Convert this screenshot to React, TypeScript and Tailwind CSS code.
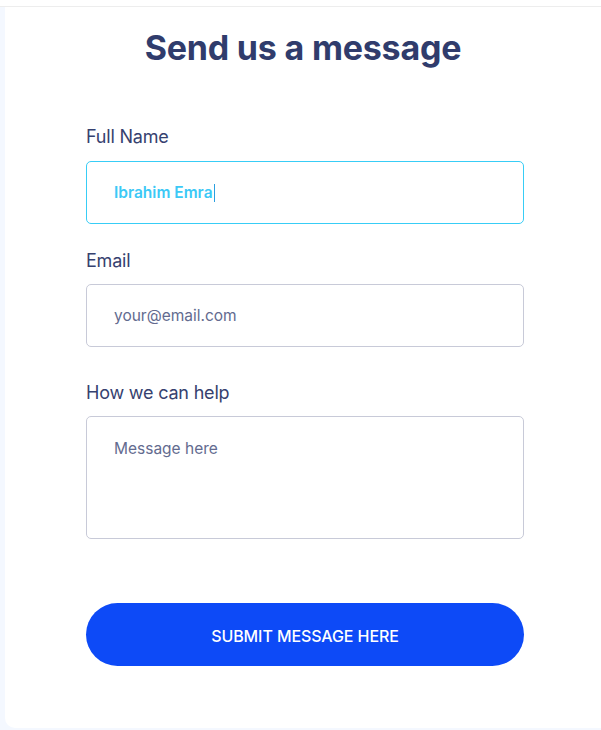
import React from "react";

export default function App() {
  return (
    <div className="w-[601px] h-[730px] bg-[#f4f8ff] overflow-hidden" style={{ fontFamily: "Inter, 'Noto Sans', sans-serif" }}>
      <div className="h-[6px] bg-white" />
      <div className="h-[1px] bg-[#ededed]" />
      <div className="ml-[5px] h-[721px] bg-white rounded-bl-[10px]">
        <h1 className="pt-[21px] text-center text-[34px] leading-[40px] font-bold tracking-[-0.2px] text-[#303c6c]">
          Send us a message
        </h1>
        <div className="pl-[81px] w-[519px]">
          <label className="block mt-[57px] text-[18px] leading-[24px] tracking-[-0.2px] text-[#36416f]">Full Name</label>
          <div className="mt-[12px] h-[63px] rounded-[5px] border border-[#38cdf6] flex items-center pl-[27px]">
            <span className="text-[15.5px] font-semibold text-[#3cc9f6]">Ibrahim Emra</span>
            <span className="ml-[1px] w-[1.5px] h-[18px] bg-[#2a9fe0]" />
          </div>
          <label className="block mt-[25px] text-[18px] leading-[24px] tracking-[-0.2px] text-[#36416f]">Email</label>
          <div className="mt-[11px] h-[63px] rounded-[5px] border border-[#c8cad8] flex items-center pl-[27px]">
            <span className="text-[15.5px] text-[#636b8f]">your@email.com</span>
          </div>
          <label className="block mt-[34px] text-[18px] leading-[24px] tracking-[-0.2px] text-[#36416f]">How we can help</label>
          <div className="mt-[11px] h-[123px] rounded-[5px] border border-[#c8cad8] pl-[27px] pt-[19px]">
            <span className="text-[15.5px] leading-[22px] text-[#636b8f]">Message here</span>
          </div>
          <button className="mt-[64px] w-full h-[63px] rounded-full bg-[#0d4af7] text-white text-[16px] font-medium tracking-[-0.1px] pt-[2px]">
            SUBMIT MESSAGE HERE
          </button>
        </div>
      </div>
    </div>
  );
}
